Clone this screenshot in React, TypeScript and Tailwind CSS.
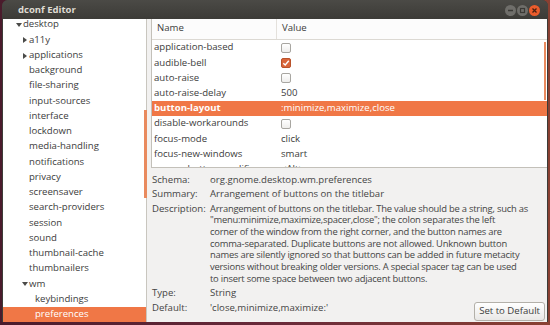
import React from 'react';

type TreeItem = { label: string; depth: number; arrow?: 'down' | 'right'; selected?: boolean };

const tree: TreeItem[] = [
  { label: 'desktop', depth: 0, arrow: 'down' },
  { label: 'a11y', depth: 1, arrow: 'right' },
  { label: 'applications', depth: 1, arrow: 'right' },
  { label: 'background', depth: 1 },
  { label: 'file-sharing', depth: 1 },
  { label: 'input-sources', depth: 1 },
  { label: 'interface', depth: 1 },
  { label: 'lockdown', depth: 1 },
  { label: 'media-handling', depth: 1 },
  { label: 'notifications', depth: 1 },
  { label: 'privacy', depth: 1 },
  { label: 'screensaver', depth: 1 },
  { label: 'search-providers', depth: 1 },
  { label: 'session', depth: 1 },
  { label: 'sound', depth: 1 },
  { label: 'thumbnail-cache', depth: 1 },
  { label: 'thumbnailers', depth: 1 },
  { label: 'wm', depth: 1, arrow: 'down' },
  { label: 'keybindings', depth: 2 },
  { label: 'preferences', depth: 2, selected: true },
];

type KeyRow = { name: string; value?: string; check?: boolean; selected?: boolean };

const keys: KeyRow[] = [
  { name: 'application-based', check: false },
  { name: 'audible-bell', check: true },
  { name: 'auto-raise', check: false },
  { name: 'auto-raise-delay', value: '500' },
  { name: 'button-layout', value: ':minimize,maximize,close', selected: true },
  { name: 'disable-workarounds', check: false },
  { name: 'focus-mode', value: 'click' },
  { name: 'focus-new-windows', value: 'smart' },
  { name: 'mouse-button-modifier', value: '<Alt>' },
];

const description = [
  'Arrangement of buttons on the titlebar. The value should be a string, such as',
  '"menu:minimize,maximize,spacer,close"; the colon separates the left',
  'corner of the window from the right corner, and the button names are',
  'comma-separated. Duplicate buttons are not allowed. Unknown button',
  'names are silently ignored so that buttons can be added in future metacity',
  'versions without breaking older versions. A special spacer tag can be used',
  'to insert some space between two adjacent buttons.',
];

const Arrow = ({ dir }: { dir: 'down' | 'right' }) => (
  <svg width="6" height="6" viewBox="0 0 6 6" className="mt-[1px]">
    {dir === 'down' ? (
      <path d="M0 1 L6 1 L3 5 Z" fill="#4a4a48" />
    ) : (
      <path d="M1 0 L5 3 L1 6 Z" fill="#4a4a48" />
    )}
  </svg>
);

const Check = ({ on }: { on: boolean }) =>
  on ? (
    <div className="w-[10px] h-[10px] rounded-[2px] bg-[#d9653a] border border-[#b9522b] flex items-center justify-center">
      <svg width="8" height="8" viewBox="0 0 8 8">
        <path d="M1.3 4.2 L3.2 6 L6.8 1.8" stroke="#fff" strokeWidth="1.4" fill="none" />
      </svg>
    </div>
  ) : (
    <div className="w-[10px] h-[10px] rounded-[2px] bg-gradient-to-b from-white to-[#efeeec] border border-[#a8a6a1]" />
  );

const TitleButton = ({ kind }: { kind: 'min' | 'max' | 'close' }) => (
  <div
    className={
      kind === 'close'
        ? 'w-[11px] h-[11px] rounded-full bg-[#ea5c2c] flex items-center justify-center'
        : 'w-[11px] h-[11px] rounded-full bg-[#6f6e6a] flex items-center justify-center'
    }
  >
    <svg width="7" height="7" viewBox="0 0 7 7">
      {kind === 'min' && <path d="M1 3.5 H6" stroke="#3a3935" strokeWidth="1.5" />}
      {kind === 'max' && <rect x="1.5" y="1.5" width="4" height="4" stroke="#3a3935" strokeWidth="1.2" fill="none" />}
      {kind === 'close' && <path d="M1.5 1.5 L5.5 5.5 M5.5 1.5 L1.5 5.5" stroke="#4a2010" strokeWidth="1.3" />}
    </svg>
  </div>
);

export default function App() {
  return (
    <div className="w-[550px] h-[325px] overflow-hidden bg-gradient-to-r from-[#4a1b2c] via-[#6a2a3a] to-[#8a4032] font-['Open_Sans',sans-serif] text-[9.6px] text-[#3c3c3c]">
      <div className="ml-[2px] w-[546px] h-[322px] rounded-t-[6px] overflow-hidden flex flex-col bg-[#3c3b37]">
        {/* title bar */}
        <div className="h-[19px] flex items-center pl-[16px] pr-[8px] bg-gradient-to-b from-[#4b4a46] to-[#3c3b37]">
          <span className="font-bold text-[9.5px] text-[#dfdbd2] mt-[2px]">dconf Editor</span>
          <div className="ml-auto flex gap-[1px] mt-[3px]">
            <TitleButton kind="min" />
            <TitleButton kind="max" />
            <TitleButton kind="close" />
          </div>
        </div>

        <div className="flex-1 flex mx-[1px] bg-[#f2f1f0] relative">
          {/* key tree */}
          <div className="w-[144px] bg-white border-r border-[#c9c6bf] overflow-hidden">
            <div className="-mt-[1.5px]">
              {tree.map((t) => (
                <div
                  key={t.label}
                  className={
                    t.selected
                      ? 'h-[15.25px] flex items-center bg-[#f07746] text-white'
                      : 'h-[15.25px] flex items-center'
                  }
                  style={{ paddingLeft: 13 + t.depth * 6 }}
                >
                  <div className="w-[7px] flex items-center">{t.arrow && <Arrow dir={t.arrow} />}</div>
                  <span>{t.label}</span>
                </div>
              ))}
            </div>
          </div>
          <div className="absolute left-[141px] top-[91px] w-[3px] h-[88px] bg-[#e98a5e]" />

          <div className="w-[4px]" />

          {/* right side */}
          <div className="flex-1 flex flex-col min-w-0">
            <div className="h-[149px] bg-white border-l border-b border-[#c3c0b9] overflow-hidden relative">
              <div className="h-[21px] flex items-center border-b border-[#dcd9d3] bg-[#fcfcfc]">
                <div className="w-[125px] pl-[5px] border-r border-[#e4e1dc] h-full flex items-center">Name</div>
                <div className="pl-[5px]">Value</div>
              </div>
              <div className="pt-[0.5px]">
                {keys.map((k) => (
                  <div
                    key={k.name}
                    className={
                      k.selected
                        ? 'h-[15.2px] flex items-center bg-[#f07746] text-white'
                        : 'h-[15.2px] flex items-center'
                    }
                  >
                    <div className={k.selected ? 'w-[129px] pl-[2px] font-bold' : 'w-[129px] pl-[2px]'}>{k.name}</div>
                    <div className="flex items-center">
                      {k.check !== undefined ? <Check on={k.check} /> : <span>{k.value}</span>}
                    </div>
                  </div>
                ))}
              </div>
              <div className="absolute right-[1px] top-[23px] w-[2px] h-[58px] bg-[#e98a5e]" />
            </div>

            {/* details */}
            <div className="flex-1 pt-[6px] pl-[1px] pr-[2px] flex flex-col gap-[2.8px] leading-[11.7px] text-[#454545]">
              <div className="flex">
                <div className="w-[58px]">Schema:</div>
                <div>org.gnome.desktop.wm.preferences</div>
              </div>
              <div className="flex">
                <div className="w-[58px]">Summary:</div>
                <div>Arrangement of buttons on the titlebar</div>
              </div>
              <div className="flex">
                <div className="w-[58px] shrink-0">Description:</div>
                <div className="whitespace-nowrap tracking-[-0.22px] text-[9.4px]">
                  {description.map((line) => (
                    <div key={line}>{line}</div>
                  ))}
                </div>
              </div>
              <div className="flex">
                <div className="w-[58px]">Type:</div>
                <div>String</div>
              </div>
              <div className="flex items-start">
                <div className="w-[58px]">Default:</div>
                <div>'close,minimize,maximize:'</div>
                <button className="ml-auto h-[19px] px-[4px] rounded-[3px] border border-[#b3b0a9] bg-gradient-to-b from-white to-[#e9e8e6] text-[#3c3c3c] leading-none">
                  Set to Default
                </button>
              </div>
            </div>
          </div>
        </div>
      </div>
    </div>
  );
}
